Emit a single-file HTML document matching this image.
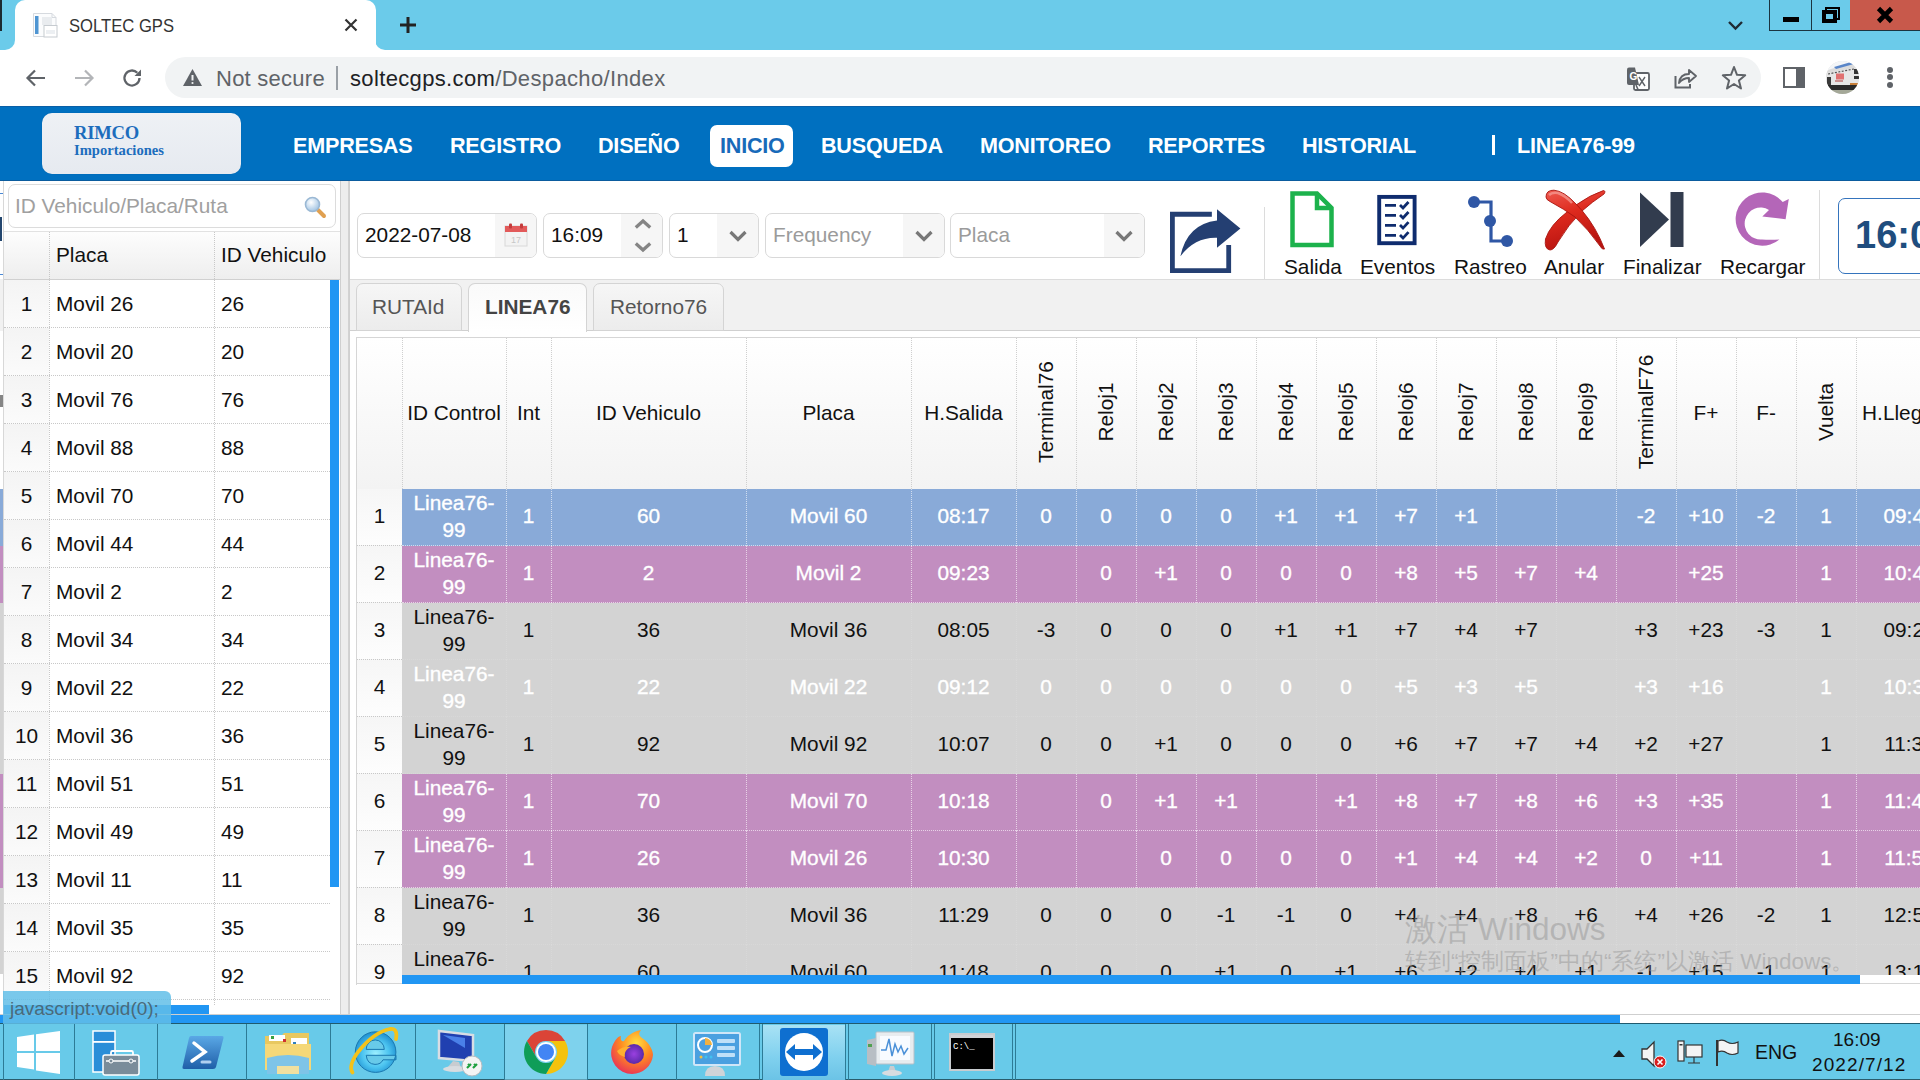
<!DOCTYPE html>
<html><head><meta charset="utf-8">
<style>
*{box-sizing:border-box;margin:0;padding:0}
html,body{width:1920px;height:1080px;overflow:hidden;background:#fff;font-family:"Liberation Sans",sans-serif;color:#000}
.a{position:absolute}
#tabbar{left:0;top:0;width:1920px;height:50px;background:#6bcbea}
#tab{left:15px;top:0;width:361px;height:51px;background:#fff;border-radius:10px 10px 0 0}
#toolbar{left:0;top:50px;width:1920px;height:56px;background:#fff}
#omni{left:165px;top:57px;width:1596px;height:41px;background:#f1f3f4;border-radius:21px}
#nav{left:0;top:106px;width:1920px;height:75px;background:#0070c0;border-top:1px solid #0a5fa6;border-bottom:1px solid #0b5c9e}
.nv{position:absolute;top:131px;font-size:21.6px;font-weight:bold;color:#fff;line-height:30px;white-space:nowrap;letter-spacing:-0.22px}
#taskbar{left:0;top:1023px;width:1920px;height:57px;background:#6acbea;border-top:1px solid #2b6a80}
.lt{font-size:20.8px;line-height:24px;white-space:nowrap;color:#111}
.lnum{left:4px;width:45px;height:48px;background:linear-gradient(180deg,#f4f4f4,#fbfbfb);text-align:center;font-size:20.8px;line-height:48px;color:#111}
.lrow{left:4px;width:326px;height:1px;border-top:1px dotted #c8c8c8}
/*MAINCSS*/
.inp{border:1px solid #d9d9d9;border-radius:7px;background:#fff;overflow:hidden}
.ib{position:absolute;right:0;top:0;height:100%;background:#f6f6f6}
.mt{font-size:20.8px;line-height:24px;white-space:nowrap;color:#111}
.tabx{top:283px;height:48px;background:linear-gradient(180deg,#f6f6f6,#ececec);border:1px solid #d4d4d4;border-radius:7px 7px 0 0}
.tt{top:295px;font-size:20.8px;line-height:24px;white-space:nowrap}
.ht{font-size:20.8px;line-height:24px;white-space:nowrap;text-align:center;color:#111}
.wt{-webkit-text-stroke:0.35px #fff}
.vt{width:200px;text-align:center;font-size:20.8px;line-height:24px;white-space:nowrap;color:#111;transform:rotate(-90deg)}
</style></head>
<body>
<!-- ===== Browser chrome ===== -->

<div id="tabbar" class="a"></div>
<!-- left foot of tab -->
<div class="a" style="left:0;top:40px;width:15px;height:11px;background:#fff"></div>
<div class="a" style="left:0;top:30px;width:15px;height:20px;background:#6bcbea;border-radius:0 0 10px 0"></div>
<div class="a" style="left:375px;top:40px;width:15px;height:11px;background:#fff"></div>
<div class="a" style="left:375px;top:30px;width:15px;height:20px;background:#6bcbea;border-radius:0 0 0 10px"></div>
<div class="a" style="left:0;top:0;width:1.5px;height:31px;background:#1c2a30"></div>
<div id="tab" class="a"></div>
<!-- favicon -->
<svg class="a" style="left:32px;top:12px" width="26" height="26" viewBox="0 0 26 26"><path d="M1.5 1.5H20L24 5.5V24.5H1.5Z" fill="#fbfcfd" stroke="#d6dadf" stroke-width="1"/><path d="M20 1.5V5.5H24" fill="none" stroke="#d6dadf" stroke-width="1"/><rect x="3" y="4" width="3.5" height="18" fill="#4f95d2"/><rect x="10" y="5" width="10" height="8" fill="#e9ecef"/><rect x="12" y="13.5" width="13" height="11.5" fill="#fff" stroke="#c6cbd0" stroke-width="1"/><rect x="14" y="18" width="9" height="4" fill="#eceff2"/></svg>
<div class="a" style="left:69px;top:14px;font-size:19px;color:#333;line-height:24px;white-space:nowrap;transform:scaleX(0.875);transform-origin:0 0">SOLTEC GPS</div>
<svg class="a" style="left:343px;top:17px" width="16" height="16" viewBox="0 0 16 16"><path d="M2.5 2.5L13.5 13.5M13.5 2.5L2.5 13.5" stroke="#333" stroke-width="2.2"/></svg>
<svg class="a" style="left:398px;top:15px" width="20" height="20" viewBox="0 0 20 20"><path d="M10 2V18M2 10H18" stroke="#222" stroke-width="3"/></svg>
<svg class="a" style="left:1727px;top:19px" width="17" height="12" viewBox="0 0 17 12"><path d="M2 3L8.5 9.5L15 3" stroke="#1f2a33" stroke-width="2.4" fill="none"/></svg>
<!-- window buttons -->
<div class="a" style="left:1769px;top:0;width:151px;height:31px;border:1.5px solid #1a3440;border-top:none;background:#6bcbea"></div>
<div class="a" style="left:1811px;top:0;width:1px;height:31px;background:#1a3440"></div>
<div class="a" style="left:1850px;top:0;width:70px;height:30px;background:#c8594b"></div>
<div class="a" style="left:1783px;top:17px;width:16px;height:5px;background:#000"></div>
<div class="a" style="left:1825px;top:7px;width:15px;height:13px;border:2px solid #000;border-top-width:2.5px"></div>
<div class="a" style="left:1822px;top:10px;width:15px;height:13px;border:4px solid #000;background:#6bcbea"></div>
<svg class="a" style="left:1875px;top:6px" width="20" height="18" viewBox="0 0 20 18"><path d="M3.5 2.5L16.5 15.5M16.5 2.5L3.5 15.5" stroke="#000" stroke-width="4.6"/></svg>
<div id="toolbar" class="a"></div>
<svg class="a" style="left:24px;top:66px" width="24" height="24" viewBox="0 0 24 24"><path d="M21 12H4M11 4.5L3.5 12L11 19.5" stroke="#5f6368" stroke-width="2.2" fill="none"/></svg>
<svg class="a" style="left:72px;top:66px" width="24" height="24" viewBox="0 0 24 24"><path d="M3 12H20M13 4.5L20.5 12L13 19.5" stroke="#b3b5b8" stroke-width="2.2" fill="none"/></svg>
<svg class="a" style="left:120px;top:66px" width="24" height="24" viewBox="0 0 24 24"><path d="M19.5 12A7.5 7.5 0 1 1 17.3 6.7" stroke="#5f6368" stroke-width="2.3" fill="none"/><path d="M21 3.5V10H14.5Z" fill="#5f6368"/></svg>
<div id="omni" class="a"></div>
<svg class="a" style="left:182px;top:68px" width="21" height="19" viewBox="0 0 21 19"><path d="M10.5 1L20 18H1Z" fill="#5f6368"/><path d="M10.5 7V12.5" stroke="#f1f3f4" stroke-width="2"/><circle cx="10.5" cy="15" r="1.1" fill="#f1f3f4"/></svg>
<div class="a" style="left:216px;top:65px;font-size:22px;color:#5f6368;line-height:28px;letter-spacing:0.25px">Not secure</div>
<div class="a" style="left:336px;top:66px;width:2px;height:24px;background:#9aa0a6"></div>
<div class="a" style="left:350px;top:65px;font-size:22px;color:#202124;line-height:28px;letter-spacing:0.35px;white-space:nowrap">soltecgps.com<span style="color:#5f6368">/Despacho/Index</span></div>
<!-- right toolbar icons -->
<svg class="a" style="left:1625px;top:66px" width="26" height="26" viewBox="0 0 26 26"><path d="M2 2H11L13 6H22Q24 6 24 8V22Q24 24 22 24H13L11 20H4Q2 20 2 18Z" fill="none" stroke="#fff" stroke-width="0"/><rect x="9" y="7" width="15" height="17" rx="1.5" fill="#fff" stroke="#5f6368" stroke-width="1.8"/><path d="M2 3.5Q2 1.5 4 1.5H10L14 19H4Q2 19 2 17Z" fill="#5f6368"/><text x="4.5" y="14" font-family="Liberation Sans" font-weight="bold" font-size="10" fill="#fff">G</text><path d="M14 11L20 20M20 11L14 20" stroke="#5f6368" stroke-width="1.4"/><path d="M11 19L13 23.5" stroke="#5f6368" stroke-width="1.6"/></svg>
<svg class="a" style="left:1673px;top:66px" width="26" height="24" viewBox="0 0 26 24"><path d="M2.5 10V21.5H17V18" stroke="#5f6368" stroke-width="2" fill="none"/><path d="M6 17Q7 8 16 8V4L23 10L16 16V12Q10 12 6 17Z" stroke="#5f6368" stroke-width="1.9" fill="none" stroke-linejoin="round"/></svg>
<svg class="a" style="left:1721px;top:65px" width="26" height="25" viewBox="0 0 26 25"><path d="M13 2L16 9.8L24.2 10.3L17.9 15.5L20 23.5L13 19L6 23.5L8.1 15.5L1.8 10.3L10 9.8Z" stroke="#5f6368" stroke-width="2" fill="none" stroke-linejoin="round"/></svg>
<div class="a" style="left:1783px;top:67px;width:22px;height:21px;border:2.5px solid #5f6368;border-right-width:9px"></div>
<svg class="a" style="left:1826px;top:61px" width="33" height="33" viewBox="0 0 33 33"><defs><clipPath id="avc"><circle cx="16.5" cy="16.5" r="16.5"/></clipPath></defs><g clip-path="url(#avc)"><rect width="33" height="33" fill="#dcdcdc"/><path d="M5 8L25 2L33 4V0H0V10Z" fill="#f4f6f8"/><path d="M8 6L25 1L28 3L10 8Z" fill="#5a86c8"/><path d="M0 12L33 6V26H0Z" fill="#e6e6e6"/><path d="M2 13L28 8" stroke="#555" stroke-width="1.2" stroke-dasharray="2 1.5"/><rect x="1" y="16" width="4" height="9" fill="#3a3a3a"/><rect x="28" y="8" width="5" height="5" fill="#333"/><rect x="28" y="15" width="5" height="3" fill="#333"/><rect x="10" y="12.5" width="8" height="6" fill="#e07070"/><rect x="9" y="19" width="8" height="2" fill="#c89090"/><rect x="24" y="22" width="9" height="4" fill="#c8803a"/><rect x="0" y="24" width="33" height="5" fill="#2a2a2a"/><rect x="0" y="29" width="33" height="4" fill="#a4a898"/></g></svg>
<div class="a" style="left:1887px;top:67px;width:6px;height:6px;border-radius:50%;background:#5f6368"></div>
<div class="a" style="left:1887px;top:74px;width:6px;height:6px;border-radius:50%;background:#5f6368"></div>
<div class="a" style="left:1887px;top:82px;width:6px;height:6px;border-radius:50%;background:#5f6368"></div>

<!-- ===== Nav ===== -->
<div id="nav" class="a"></div>
<div class="a" style="left:42px;top:113px;width:199px;height:61px;border-radius:10px;background:linear-gradient(180deg,#eef1f5,#e6eaf0);box-shadow:0 0 1px rgba(0,0,0,0.2)"></div>
<div class="a" style="left:74px;top:122px;font-family:'Liberation Serif',serif;font-weight:bold;font-size:18.6px;color:#1d6dbd;line-height:22px;letter-spacing:-0.2px">RIMCO</div>
<div class="a" style="left:74px;top:141px;font-family:'Liberation Serif',serif;font-weight:bold;font-size:14.6px;color:#1d6dbd;line-height:18px">Importaciones</div>
<div class="nv" style="left:293px">EMPRESAS</div>
<div class="nv" style="left:450px">REGISTRO</div>
<div class="nv" style="left:598px">DISEÑO</div>
<div class="a" style="left:710px;top:125px;width:83px;height:42px;background:#fff;border-radius:7px"></div>
<div class="nv" style="left:720px;color:#186ab9">INICIO</div>
<div class="nv" style="left:821px">BUSQUEDA</div>
<div class="nv" style="left:980px">MONITOREO</div>
<div class="nv" style="left:1148px">REPORTES</div>
<div class="nv" style="left:1302px">HISTORIAL</div>
<div class="a" style="left:1492px;top:135px;width:3px;height:20px;background:#fff"></div>
<div class="nv" style="left:1517px">LINEA76-99</div>












<!-- ===== Main ===== -->
<div class="a" style="left:349px;top:181px;width:1571px;height:834px;background:#fff"></div>
<div class="a inp" style="left:357px;top:213px;width:180px;height:45px"><div class="ib" style="width:41px"></div></div>
<div class="a mt" style="left:365px;top:223px;color:#111">2022-07-08</div>
<svg class="a" style="left:503px;top:222px" width="26" height="26" viewBox="0 0 26 26"><rect x="2" y="4" width="22" height="20" fill="#f3f3f3" stroke="#d8d8d8"/><rect x="2" y="4" width="22" height="6" fill="#e25a5a"/><rect x="6" y="1.5" width="3" height="5" rx="1" fill="#c43b3b"/><rect x="17" y="1.5" width="3" height="5" rx="1" fill="#c43b3b"/><text x="8" y="20.5" font-family="Liberation Sans" font-size="9" fill="#c7c7c7">17</text></svg>
<div class="a inp" style="left:543px;top:213px;width:120px;height:45px"><div class="ib" style="width:41px"></div></div>
<div class="a mt" style="left:551px;top:223px;color:#111">16:09</div>
<svg class="a" style="left:633px;top:216px" width="20" height="40" viewBox="0 0 20 40"><path d="M2.8 11.5L10 5L17.2 11.5M2.8 27.5L10 34L17.2 27.5" stroke="#858585" stroke-width="3.3" fill="none"/></svg>
<div class="a inp" style="left:669px;top:213px;width:90px;height:45px"><div class="ib" style="width:41px"></div></div>
<div class="a mt" style="left:677px;top:223px;color:#111">1</div>
<svg class="a chev" style="left:728px;top:229px" width="20" height="14" viewBox="0 0 20 14"><path d="M2.5 3L10 10.5L17.5 3" stroke="#787878" stroke-width="3.2" fill="none"/></svg>
<div class="a inp" style="left:765px;top:213px;width:180px;height:45px"><div class="ib" style="width:41px"></div></div>
<div class="a mt" style="left:773px;top:223px;color:#9b9b9b">Frequency</div>
<svg class="a chev" style="left:914px;top:229px" width="20" height="14" viewBox="0 0 20 14"><path d="M2.5 3L10 10.5L17.5 3" stroke="#787878" stroke-width="3.2" fill="none"/></svg>
<div class="a inp" style="left:950px;top:213px;width:195px;height:45px"><div class="ib" style="width:40px"></div></div>
<div class="a mt" style="left:958px;top:223px;color:#9b9b9b">Placa</div>
<svg class="a chev" style="left:1114px;top:229px" width="20" height="14" viewBox="0 0 20 14"><path d="M2.5 3L10 10.5L17.5 3" stroke="#787878" stroke-width="3.2" fill="none"/></svg>

<svg class="a" style="left:1160px;top:200px" width="90" height="80" viewBox="0 0 90 80"><path d="M51.85 14.25H12.4V70.6H68.7V45" stroke="#243f72" stroke-width="4.8" fill="none"/><path d="M20.4 56.3Q27 24 57 20.4V9.26L80.4 28.5L57 47.8V37.8Q35 37 20.4 56.3Z" fill="#243f72"/></svg>
<div class="a" style="left:1264px;top:207px;width:1px;height:72px;background:#dcdcdc"></div>
<div class="a" style="left:1819px;top:190px;width:1px;height:89px;background:#dcdcdc"></div>
<svg class="a" style="left:1288px;top:189px" width="48" height="60" viewBox="0 0 48 60"><path d="M4.5 4.5H29L43.5 19V56H4.5Z" stroke="#1cb24c" stroke-width="4.5" fill="#fff" stroke-linejoin="miter"/><path d="M29 4.5V19H43.5" stroke="#1cb24c" stroke-width="4.5" fill="none"/></svg>
<svg class="a" style="left:1375px;top:193px" width="44" height="56" viewBox="0 0 44 56"><rect x="4.2" y="3.9" width="35.4" height="46.3" stroke="#0f2c6e" stroke-width="3.9" fill="#fff"/><g stroke="#0f2c6e" stroke-width="2.6" fill="none"><path d="M10 12.3H21M10 22.3H21M10 32.4H21M10 42.4H21" stroke-width="2.8"/><path d="M25 12L28 15L33.5 9M25 22L28 25L33.5 19M25 32.1L28 35.1L33.5 29.1M25 42.1L28 45.1L33.5 39.1" stroke-width="2.8"/></g></svg>
<svg class="a" style="left:1465px;top:194px" width="52" height="56" viewBox="0 0 52 56"><path d="M9 8H26V27H26V47H42" stroke="#2f57a5" stroke-width="3.2" fill="none"/><circle cx="9" cy="8" r="6" fill="#2f57a5"/><circle cx="25" cy="27" r="6" fill="#2f57a5"/><circle cx="42" cy="47" r="6" fill="#2f57a5"/></svg>
<svg class="a" style="left:1538px;top:183px" width="75" height="75" viewBox="0 0 75 75"><defs><linearGradient id="xg" x1="0" y1="0" x2="0.3" y2="1"><stop offset="0" stop-color="#ee5a50"/><stop offset="0.45" stop-color="#de2a1e"/><stop offset="1" stop-color="#b81410"/></linearGradient></defs><g fill="url(#xg)" stroke="#a8140e" stroke-width="0.9"><path d="M12 67Q6 66 7.5 56Q12 42 29 29L38 22Q52 12 65.5 7.5Q68 8 66 11Q54 19 44 28Q30 42 20 59Q16 67 12 67Z"/><path d="M8 14Q8 7 16 7.2Q26 8 38 21L44 27.5Q58 44 66.5 66Q64 67 62 63Q50 46 37 34Q26 26 12 18.5Q8 16.5 8 14Z"/></g><path d="M11 12Q14 9 20 10Q28 13 34 20" stroke="#f6a098" stroke-width="2.5" fill="none" opacity="0.7"/></svg>
<svg class="a" style="left:1638px;top:190px" width="48" height="60" viewBox="0 0 48 60"><path d="M2 2.5L31 29.5L2 57Z" fill="#323c4e"/><rect x="32.5" y="2" width="13" height="55" fill="#323c4e"/></svg>
<svg class="a" style="left:1725px;top:183px" width="75" height="70" viewBox="0 0 75 70"><path d="M44 26.9A16 16 0 1 0 37 56.5Q46 57 54.4 56.4A26.6 26.6 0 1 1 57.7 19.1L63.8 15.9L60.6 36.3L37.3 33.4Z" fill="#b466b8"/></svg>

<div class="a mt" style="left:1284px;top:255px">Salida</div>
<div class="a mt" style="left:1360px;top:255px">Eventos</div>
<div class="a mt" style="left:1454px;top:255px">Rastreo</div>
<div class="a mt" style="left:1544px;top:255px">Anular</div>
<div class="a mt" style="left:1623px;top:255px">Finalizar</div>
<div class="a mt" style="left:1720px;top:255px">Recargar</div>
<div class="a" style="left:1838px;top:198px;width:120px;height:76px;border:1.5px solid #3574bd;border-radius:7px;background:#fff"></div>
<div class="a" style="left:1855px;top:213px;font-size:38px;font-weight:bold;color:#1f4d7e;line-height:44px;white-space:nowrap">16:09</div>
<div class="a" style="left:349px;top:279px;width:1571px;height:52px;background:#f1f1f1;border-top:1px solid #dcdcdc;border-bottom:1px solid #d0d0d0"></div>
<div class="a tabx" style="left:356px;width:106px"></div><div class="a tt" style="left:372px;color:#555">RUTAId</div>
<div class="a tabx" style="left:468px;width:119px;height:49px;background:linear-gradient(180deg,#fafafa,#ffffff);border-bottom:none"></div><div class="a tt" style="left:485px;color:#444;font-weight:bold">LINEA76</div>
<div class="a tabx" style="left:593px;width:131px"></div><div class="a tt" style="left:610px;color:#555">Retorno76</div>
<div class="a" style="left:356px;top:337px;width:1564px;height:648px;border:1px solid #d6d6d6;border-right:none;background:#fff"></div>
<div class="a" style="left:357px;top:338px;width:1563px;height:151px;background:linear-gradient(180deg,#ffffff,#f3f3f3)"></div>
<div class="a" style="left:402px;top:338px;height:151px;border-left:1px dotted #cfcfcf"></div>
<div class="a" style="left:506px;top:338px;height:151px;border-left:1px dotted #cfcfcf"></div>
<div class="a" style="left:551px;top:338px;height:151px;border-left:1px dotted #cfcfcf"></div>
<div class="a" style="left:746px;top:338px;height:151px;border-left:1px dotted #cfcfcf"></div>
<div class="a" style="left:911px;top:338px;height:151px;border-left:1px dotted #cfcfcf"></div>
<div class="a" style="left:1016px;top:338px;height:151px;border-left:1px dotted #cfcfcf"></div>
<div class="a" style="left:1076px;top:338px;height:151px;border-left:1px dotted #cfcfcf"></div>
<div class="a" style="left:1136px;top:338px;height:151px;border-left:1px dotted #cfcfcf"></div>
<div class="a" style="left:1196px;top:338px;height:151px;border-left:1px dotted #cfcfcf"></div>
<div class="a" style="left:1256px;top:338px;height:151px;border-left:1px dotted #cfcfcf"></div>
<div class="a" style="left:1316px;top:338px;height:151px;border-left:1px dotted #cfcfcf"></div>
<div class="a" style="left:1376px;top:338px;height:151px;border-left:1px dotted #cfcfcf"></div>
<div class="a" style="left:1436px;top:338px;height:151px;border-left:1px dotted #cfcfcf"></div>
<div class="a" style="left:1496px;top:338px;height:151px;border-left:1px dotted #cfcfcf"></div>
<div class="a" style="left:1556px;top:338px;height:151px;border-left:1px dotted #cfcfcf"></div>
<div class="a" style="left:1616px;top:338px;height:151px;border-left:1px dotted #cfcfcf"></div>
<div class="a" style="left:1676px;top:338px;height:151px;border-left:1px dotted #cfcfcf"></div>
<div class="a" style="left:1736px;top:338px;height:151px;border-left:1px dotted #cfcfcf"></div>
<div class="a" style="left:1796px;top:338px;height:151px;border-left:1px dotted #cfcfcf"></div>
<div class="a" style="left:1856px;top:338px;height:151px;border-left:1px dotted #cfcfcf"></div>
<div class="a ht" style="left:402px;width:104px;top:400.5px">ID Control</div>
<div class="a ht" style="left:506px;width:45px;top:400.5px">Int</div>
<div class="a ht" style="left:551px;width:195px;top:400.5px">ID Vehiculo</div>
<div class="a ht" style="left:746px;width:165px;top:400.5px">Placa</div>
<div class="a ht" style="left:911px;width:105px;top:400.5px">H.Salida</div>
<div class="a vt" style="left:946.0px;top:400.0px">Terminal76</div>
<div class="a vt" style="left:1006.0px;top:400.0px">Reloj1</div>
<div class="a vt" style="left:1066.0px;top:400.0px">Reloj2</div>
<div class="a vt" style="left:1126.0px;top:400.0px">Reloj3</div>
<div class="a vt" style="left:1186.0px;top:400.0px">Reloj4</div>
<div class="a vt" style="left:1246.0px;top:400.0px">Reloj5</div>
<div class="a vt" style="left:1306.0px;top:400.0px">Reloj6</div>
<div class="a vt" style="left:1366.0px;top:400.0px">Reloj7</div>
<div class="a vt" style="left:1426.0px;top:400.0px">Reloj8</div>
<div class="a vt" style="left:1486.0px;top:400.0px">Reloj9</div>
<div class="a vt" style="left:1546.0px;top:400.0px">TerminalF76</div>
<div class="a ht" style="left:1676px;width:60px;top:400.5px">F+</div>
<div class="a ht" style="left:1736px;width:60px;top:400.5px">F-</div>
<div class="a vt" style="left:1726.0px;top:400.0px">Vuelta</div>
<div class="a ht" style="left:1856px;width:107px;top:400.5px">H.Llegada</div>
<div class="a" style="left:357px;top:489px;width:45px;height:57px;background:linear-gradient(180deg,#f6f6f6,#fdfdfd);border-bottom:1px dotted #c8c8c8"></div>
<div class="a ht" style="left:357px;width:45px;top:504px;color:#111">1</div>
<div class="a" style="left:402px;top:489px;width:1518px;height:57px;background:#89aad8"></div>
<div class="a" style="left:506px;top:489px;height:57px;border-left:1px dotted rgba(255,255,255,0.6)"></div>
<div class="a" style="left:551px;top:489px;height:57px;border-left:1px dotted rgba(255,255,255,0.6)"></div>
<div class="a" style="left:746px;top:489px;height:57px;border-left:1px dotted rgba(255,255,255,0.6)"></div>
<div class="a" style="left:911px;top:489px;height:57px;border-left:1px dotted rgba(255,255,255,0.6)"></div>
<div class="a" style="left:1016px;top:489px;height:57px;border-left:1px dotted rgba(255,255,255,0.6)"></div>
<div class="a" style="left:1076px;top:489px;height:57px;border-left:1px dotted rgba(255,255,255,0.6)"></div>
<div class="a" style="left:1136px;top:489px;height:57px;border-left:1px dotted rgba(255,255,255,0.6)"></div>
<div class="a" style="left:1196px;top:489px;height:57px;border-left:1px dotted rgba(255,255,255,0.6)"></div>
<div class="a" style="left:1256px;top:489px;height:57px;border-left:1px dotted rgba(255,255,255,0.6)"></div>
<div class="a" style="left:1316px;top:489px;height:57px;border-left:1px dotted rgba(255,255,255,0.6)"></div>
<div class="a" style="left:1376px;top:489px;height:57px;border-left:1px dotted rgba(255,255,255,0.6)"></div>
<div class="a" style="left:1436px;top:489px;height:57px;border-left:1px dotted rgba(255,255,255,0.6)"></div>
<div class="a" style="left:1496px;top:489px;height:57px;border-left:1px dotted rgba(255,255,255,0.6)"></div>
<div class="a" style="left:1556px;top:489px;height:57px;border-left:1px dotted rgba(255,255,255,0.6)"></div>
<div class="a" style="left:1616px;top:489px;height:57px;border-left:1px dotted rgba(255,255,255,0.6)"></div>
<div class="a" style="left:1676px;top:489px;height:57px;border-left:1px dotted rgba(255,255,255,0.6)"></div>
<div class="a" style="left:1736px;top:489px;height:57px;border-left:1px dotted rgba(255,255,255,0.6)"></div>
<div class="a" style="left:1796px;top:489px;height:57px;border-left:1px dotted rgba(255,255,255,0.6)"></div>
<div class="a" style="left:1856px;top:489px;height:57px;border-left:1px dotted rgba(255,255,255,0.6)"></div>
<div class="a" style="left:402px;top:545px;width:1518px;height:1px;border-top:1px dotted rgba(255,255,255,0.6)"></div>
<div class="a wt" style="left:402px;width:104px;top:489px;height:54px;color:#fff;text-align:center;font-size:20.8px;line-height:27px">Linea76-<br>99</div>
<div class="a ht wt" style="left:506px;width:45px;top:504px;color:#fff">1</div>
<div class="a ht wt" style="left:551px;width:195px;top:504px;color:#fff">60</div>
<div class="a ht wt" style="left:746px;width:165px;top:504px;color:#fff">Movil 60</div>
<div class="a ht wt" style="left:911px;width:105px;top:504px;color:#fff">08:17</div>
<div class="a ht wt" style="left:1016px;width:60px;top:504px;color:#fff">0</div>
<div class="a ht wt" style="left:1076px;width:60px;top:504px;color:#fff">0</div>
<div class="a ht wt" style="left:1136px;width:60px;top:504px;color:#fff">0</div>
<div class="a ht wt" style="left:1196px;width:60px;top:504px;color:#fff">0</div>
<div class="a ht wt" style="left:1256px;width:60px;top:504px;color:#fff">+1</div>
<div class="a ht wt" style="left:1316px;width:60px;top:504px;color:#fff">+1</div>
<div class="a ht wt" style="left:1376px;width:60px;top:504px;color:#fff">+7</div>
<div class="a ht wt" style="left:1436px;width:60px;top:504px;color:#fff">+1</div>
<div class="a ht wt" style="left:1616px;width:60px;top:504px;color:#fff">-2</div>
<div class="a ht wt" style="left:1676px;width:60px;top:504px;color:#fff">+10</div>
<div class="a ht wt" style="left:1736px;width:60px;top:504px;color:#fff">-2</div>
<div class="a ht wt" style="left:1796px;width:60px;top:504px;color:#fff">1</div>
<div class="a ht wt" style="left:1856px;width:107px;top:504px;color:#fff">09:45</div>
<div class="a" style="left:357px;top:546px;width:45px;height:57px;background:linear-gradient(180deg,#f6f6f6,#fdfdfd);border-bottom:1px dotted #c8c8c8"></div>
<div class="a ht" style="left:357px;width:45px;top:561px;color:#111">2</div>
<div class="a" style="left:402px;top:546px;width:1518px;height:57px;background:#c28ec0"></div>
<div class="a" style="left:506px;top:546px;height:57px;border-left:1px dotted rgba(255,255,255,0.6)"></div>
<div class="a" style="left:551px;top:546px;height:57px;border-left:1px dotted rgba(255,255,255,0.6)"></div>
<div class="a" style="left:746px;top:546px;height:57px;border-left:1px dotted rgba(255,255,255,0.6)"></div>
<div class="a" style="left:911px;top:546px;height:57px;border-left:1px dotted rgba(255,255,255,0.6)"></div>
<div class="a" style="left:1016px;top:546px;height:57px;border-left:1px dotted rgba(255,255,255,0.6)"></div>
<div class="a" style="left:1076px;top:546px;height:57px;border-left:1px dotted rgba(255,255,255,0.6)"></div>
<div class="a" style="left:1136px;top:546px;height:57px;border-left:1px dotted rgba(255,255,255,0.6)"></div>
<div class="a" style="left:1196px;top:546px;height:57px;border-left:1px dotted rgba(255,255,255,0.6)"></div>
<div class="a" style="left:1256px;top:546px;height:57px;border-left:1px dotted rgba(255,255,255,0.6)"></div>
<div class="a" style="left:1316px;top:546px;height:57px;border-left:1px dotted rgba(255,255,255,0.6)"></div>
<div class="a" style="left:1376px;top:546px;height:57px;border-left:1px dotted rgba(255,255,255,0.6)"></div>
<div class="a" style="left:1436px;top:546px;height:57px;border-left:1px dotted rgba(255,255,255,0.6)"></div>
<div class="a" style="left:1496px;top:546px;height:57px;border-left:1px dotted rgba(255,255,255,0.6)"></div>
<div class="a" style="left:1556px;top:546px;height:57px;border-left:1px dotted rgba(255,255,255,0.6)"></div>
<div class="a" style="left:1616px;top:546px;height:57px;border-left:1px dotted rgba(255,255,255,0.6)"></div>
<div class="a" style="left:1676px;top:546px;height:57px;border-left:1px dotted rgba(255,255,255,0.6)"></div>
<div class="a" style="left:1736px;top:546px;height:57px;border-left:1px dotted rgba(255,255,255,0.6)"></div>
<div class="a" style="left:1796px;top:546px;height:57px;border-left:1px dotted rgba(255,255,255,0.6)"></div>
<div class="a" style="left:1856px;top:546px;height:57px;border-left:1px dotted rgba(255,255,255,0.6)"></div>
<div class="a" style="left:402px;top:602px;width:1518px;height:1px;border-top:1px dotted rgba(255,255,255,0.6)"></div>
<div class="a wt" style="left:402px;width:104px;top:546px;height:54px;color:#fff;text-align:center;font-size:20.8px;line-height:27px">Linea76-<br>99</div>
<div class="a ht wt" style="left:506px;width:45px;top:561px;color:#fff">1</div>
<div class="a ht wt" style="left:551px;width:195px;top:561px;color:#fff">2</div>
<div class="a ht wt" style="left:746px;width:165px;top:561px;color:#fff">Movil 2</div>
<div class="a ht wt" style="left:911px;width:105px;top:561px;color:#fff">09:23</div>
<div class="a ht wt" style="left:1076px;width:60px;top:561px;color:#fff">0</div>
<div class="a ht wt" style="left:1136px;width:60px;top:561px;color:#fff">+1</div>
<div class="a ht wt" style="left:1196px;width:60px;top:561px;color:#fff">0</div>
<div class="a ht wt" style="left:1256px;width:60px;top:561px;color:#fff">0</div>
<div class="a ht wt" style="left:1316px;width:60px;top:561px;color:#fff">0</div>
<div class="a ht wt" style="left:1376px;width:60px;top:561px;color:#fff">+8</div>
<div class="a ht wt" style="left:1436px;width:60px;top:561px;color:#fff">+5</div>
<div class="a ht wt" style="left:1496px;width:60px;top:561px;color:#fff">+7</div>
<div class="a ht wt" style="left:1556px;width:60px;top:561px;color:#fff">+4</div>
<div class="a ht wt" style="left:1676px;width:60px;top:561px;color:#fff">+25</div>
<div class="a ht wt" style="left:1796px;width:60px;top:561px;color:#fff">1</div>
<div class="a ht wt" style="left:1856px;width:107px;top:561px;color:#fff">10:42</div>
<div class="a" style="left:357px;top:603px;width:45px;height:57px;background:linear-gradient(180deg,#f6f6f6,#fdfdfd);border-bottom:1px dotted #c8c8c8"></div>
<div class="a ht" style="left:357px;width:45px;top:618px;color:#111">3</div>
<div class="a" style="left:402px;top:603px;width:1518px;height:57px;background:#d3d3d3"></div>
<div class="a" style="left:506px;top:603px;height:57px;border-left:1px dotted rgba(255,255,255,0.12)"></div>
<div class="a" style="left:551px;top:603px;height:57px;border-left:1px dotted rgba(255,255,255,0.12)"></div>
<div class="a" style="left:746px;top:603px;height:57px;border-left:1px dotted rgba(255,255,255,0.12)"></div>
<div class="a" style="left:911px;top:603px;height:57px;border-left:1px dotted rgba(255,255,255,0.12)"></div>
<div class="a" style="left:1016px;top:603px;height:57px;border-left:1px dotted rgba(255,255,255,0.12)"></div>
<div class="a" style="left:1076px;top:603px;height:57px;border-left:1px dotted rgba(255,255,255,0.12)"></div>
<div class="a" style="left:1136px;top:603px;height:57px;border-left:1px dotted rgba(255,255,255,0.12)"></div>
<div class="a" style="left:1196px;top:603px;height:57px;border-left:1px dotted rgba(255,255,255,0.12)"></div>
<div class="a" style="left:1256px;top:603px;height:57px;border-left:1px dotted rgba(255,255,255,0.12)"></div>
<div class="a" style="left:1316px;top:603px;height:57px;border-left:1px dotted rgba(255,255,255,0.12)"></div>
<div class="a" style="left:1376px;top:603px;height:57px;border-left:1px dotted rgba(255,255,255,0.12)"></div>
<div class="a" style="left:1436px;top:603px;height:57px;border-left:1px dotted rgba(255,255,255,0.12)"></div>
<div class="a" style="left:1496px;top:603px;height:57px;border-left:1px dotted rgba(255,255,255,0.12)"></div>
<div class="a" style="left:1556px;top:603px;height:57px;border-left:1px dotted rgba(255,255,255,0.12)"></div>
<div class="a" style="left:1616px;top:603px;height:57px;border-left:1px dotted rgba(255,255,255,0.12)"></div>
<div class="a" style="left:1676px;top:603px;height:57px;border-left:1px dotted rgba(255,255,255,0.12)"></div>
<div class="a" style="left:1736px;top:603px;height:57px;border-left:1px dotted rgba(255,255,255,0.12)"></div>
<div class="a" style="left:1796px;top:603px;height:57px;border-left:1px dotted rgba(255,255,255,0.12)"></div>
<div class="a" style="left:1856px;top:603px;height:57px;border-left:1px dotted rgba(255,255,255,0.12)"></div>
<div class="a" style="left:402px;top:659px;width:1518px;height:1px;border-top:1px dotted rgba(255,255,255,0.12)"></div>
<div class="a" style="left:402px;width:104px;top:603px;height:54px;color:#111;text-align:center;font-size:20.8px;line-height:27px">Linea76-<br>99</div>
<div class="a ht" style="left:506px;width:45px;top:618px;color:#111">1</div>
<div class="a ht" style="left:551px;width:195px;top:618px;color:#111">36</div>
<div class="a ht" style="left:746px;width:165px;top:618px;color:#111">Movil 36</div>
<div class="a ht" style="left:911px;width:105px;top:618px;color:#111">08:05</div>
<div class="a ht" style="left:1016px;width:60px;top:618px;color:#111">-3</div>
<div class="a ht" style="left:1076px;width:60px;top:618px;color:#111">0</div>
<div class="a ht" style="left:1136px;width:60px;top:618px;color:#111">0</div>
<div class="a ht" style="left:1196px;width:60px;top:618px;color:#111">0</div>
<div class="a ht" style="left:1256px;width:60px;top:618px;color:#111">+1</div>
<div class="a ht" style="left:1316px;width:60px;top:618px;color:#111">+1</div>
<div class="a ht" style="left:1376px;width:60px;top:618px;color:#111">+7</div>
<div class="a ht" style="left:1436px;width:60px;top:618px;color:#111">+4</div>
<div class="a ht" style="left:1496px;width:60px;top:618px;color:#111">+7</div>
<div class="a ht" style="left:1616px;width:60px;top:618px;color:#111">+3</div>
<div class="a ht" style="left:1676px;width:60px;top:618px;color:#111">+23</div>
<div class="a ht" style="left:1736px;width:60px;top:618px;color:#111">-3</div>
<div class="a ht" style="left:1796px;width:60px;top:618px;color:#111">1</div>
<div class="a ht" style="left:1856px;width:107px;top:618px;color:#111">09:28</div>
<div class="a" style="left:357px;top:660px;width:45px;height:57px;background:linear-gradient(180deg,#f6f6f6,#fdfdfd);border-bottom:1px dotted #c8c8c8"></div>
<div class="a ht" style="left:357px;width:45px;top:675px;color:#111">4</div>
<div class="a" style="left:402px;top:660px;width:1518px;height:57px;background:#d3d3d3"></div>
<div class="a" style="left:506px;top:660px;height:57px;border-left:1px dotted rgba(255,255,255,0.12)"></div>
<div class="a" style="left:551px;top:660px;height:57px;border-left:1px dotted rgba(255,255,255,0.12)"></div>
<div class="a" style="left:746px;top:660px;height:57px;border-left:1px dotted rgba(255,255,255,0.12)"></div>
<div class="a" style="left:911px;top:660px;height:57px;border-left:1px dotted rgba(255,255,255,0.12)"></div>
<div class="a" style="left:1016px;top:660px;height:57px;border-left:1px dotted rgba(255,255,255,0.12)"></div>
<div class="a" style="left:1076px;top:660px;height:57px;border-left:1px dotted rgba(255,255,255,0.12)"></div>
<div class="a" style="left:1136px;top:660px;height:57px;border-left:1px dotted rgba(255,255,255,0.12)"></div>
<div class="a" style="left:1196px;top:660px;height:57px;border-left:1px dotted rgba(255,255,255,0.12)"></div>
<div class="a" style="left:1256px;top:660px;height:57px;border-left:1px dotted rgba(255,255,255,0.12)"></div>
<div class="a" style="left:1316px;top:660px;height:57px;border-left:1px dotted rgba(255,255,255,0.12)"></div>
<div class="a" style="left:1376px;top:660px;height:57px;border-left:1px dotted rgba(255,255,255,0.12)"></div>
<div class="a" style="left:1436px;top:660px;height:57px;border-left:1px dotted rgba(255,255,255,0.12)"></div>
<div class="a" style="left:1496px;top:660px;height:57px;border-left:1px dotted rgba(255,255,255,0.12)"></div>
<div class="a" style="left:1556px;top:660px;height:57px;border-left:1px dotted rgba(255,255,255,0.12)"></div>
<div class="a" style="left:1616px;top:660px;height:57px;border-left:1px dotted rgba(255,255,255,0.12)"></div>
<div class="a" style="left:1676px;top:660px;height:57px;border-left:1px dotted rgba(255,255,255,0.12)"></div>
<div class="a" style="left:1736px;top:660px;height:57px;border-left:1px dotted rgba(255,255,255,0.12)"></div>
<div class="a" style="left:1796px;top:660px;height:57px;border-left:1px dotted rgba(255,255,255,0.12)"></div>
<div class="a" style="left:1856px;top:660px;height:57px;border-left:1px dotted rgba(255,255,255,0.12)"></div>
<div class="a" style="left:402px;top:716px;width:1518px;height:1px;border-top:1px dotted rgba(255,255,255,0.12)"></div>
<div class="a wt" style="left:402px;width:104px;top:660px;height:54px;color:#fff;text-align:center;font-size:20.8px;line-height:27px">Linea76-<br>99</div>
<div class="a ht wt" style="left:506px;width:45px;top:675px;color:#fff">1</div>
<div class="a ht wt" style="left:551px;width:195px;top:675px;color:#fff">22</div>
<div class="a ht wt" style="left:746px;width:165px;top:675px;color:#fff">Movil 22</div>
<div class="a ht wt" style="left:911px;width:105px;top:675px;color:#fff">09:12</div>
<div class="a ht wt" style="left:1016px;width:60px;top:675px;color:#fff">0</div>
<div class="a ht wt" style="left:1076px;width:60px;top:675px;color:#fff">0</div>
<div class="a ht wt" style="left:1136px;width:60px;top:675px;color:#fff">0</div>
<div class="a ht wt" style="left:1196px;width:60px;top:675px;color:#fff">0</div>
<div class="a ht wt" style="left:1256px;width:60px;top:675px;color:#fff">0</div>
<div class="a ht wt" style="left:1316px;width:60px;top:675px;color:#fff">0</div>
<div class="a ht wt" style="left:1376px;width:60px;top:675px;color:#fff">+5</div>
<div class="a ht wt" style="left:1436px;width:60px;top:675px;color:#fff">+3</div>
<div class="a ht wt" style="left:1496px;width:60px;top:675px;color:#fff">+5</div>
<div class="a ht wt" style="left:1616px;width:60px;top:675px;color:#fff">+3</div>
<div class="a ht wt" style="left:1676px;width:60px;top:675px;color:#fff">+16</div>
<div class="a ht wt" style="left:1796px;width:60px;top:675px;color:#fff">1</div>
<div class="a ht wt" style="left:1856px;width:107px;top:675px;color:#fff">10:30</div>
<div class="a" style="left:357px;top:717px;width:45px;height:57px;background:linear-gradient(180deg,#f6f6f6,#fdfdfd);border-bottom:1px dotted #c8c8c8"></div>
<div class="a ht" style="left:357px;width:45px;top:732px;color:#111">5</div>
<div class="a" style="left:402px;top:717px;width:1518px;height:57px;background:#d3d3d3"></div>
<div class="a" style="left:506px;top:717px;height:57px;border-left:1px dotted rgba(255,255,255,0.12)"></div>
<div class="a" style="left:551px;top:717px;height:57px;border-left:1px dotted rgba(255,255,255,0.12)"></div>
<div class="a" style="left:746px;top:717px;height:57px;border-left:1px dotted rgba(255,255,255,0.12)"></div>
<div class="a" style="left:911px;top:717px;height:57px;border-left:1px dotted rgba(255,255,255,0.12)"></div>
<div class="a" style="left:1016px;top:717px;height:57px;border-left:1px dotted rgba(255,255,255,0.12)"></div>
<div class="a" style="left:1076px;top:717px;height:57px;border-left:1px dotted rgba(255,255,255,0.12)"></div>
<div class="a" style="left:1136px;top:717px;height:57px;border-left:1px dotted rgba(255,255,255,0.12)"></div>
<div class="a" style="left:1196px;top:717px;height:57px;border-left:1px dotted rgba(255,255,255,0.12)"></div>
<div class="a" style="left:1256px;top:717px;height:57px;border-left:1px dotted rgba(255,255,255,0.12)"></div>
<div class="a" style="left:1316px;top:717px;height:57px;border-left:1px dotted rgba(255,255,255,0.12)"></div>
<div class="a" style="left:1376px;top:717px;height:57px;border-left:1px dotted rgba(255,255,255,0.12)"></div>
<div class="a" style="left:1436px;top:717px;height:57px;border-left:1px dotted rgba(255,255,255,0.12)"></div>
<div class="a" style="left:1496px;top:717px;height:57px;border-left:1px dotted rgba(255,255,255,0.12)"></div>
<div class="a" style="left:1556px;top:717px;height:57px;border-left:1px dotted rgba(255,255,255,0.12)"></div>
<div class="a" style="left:1616px;top:717px;height:57px;border-left:1px dotted rgba(255,255,255,0.12)"></div>
<div class="a" style="left:1676px;top:717px;height:57px;border-left:1px dotted rgba(255,255,255,0.12)"></div>
<div class="a" style="left:1736px;top:717px;height:57px;border-left:1px dotted rgba(255,255,255,0.12)"></div>
<div class="a" style="left:1796px;top:717px;height:57px;border-left:1px dotted rgba(255,255,255,0.12)"></div>
<div class="a" style="left:1856px;top:717px;height:57px;border-left:1px dotted rgba(255,255,255,0.12)"></div>
<div class="a" style="left:402px;top:773px;width:1518px;height:1px;border-top:1px dotted rgba(255,255,255,0.12)"></div>
<div class="a" style="left:402px;width:104px;top:717px;height:54px;color:#111;text-align:center;font-size:20.8px;line-height:27px">Linea76-<br>99</div>
<div class="a ht" style="left:506px;width:45px;top:732px;color:#111">1</div>
<div class="a ht" style="left:551px;width:195px;top:732px;color:#111">92</div>
<div class="a ht" style="left:746px;width:165px;top:732px;color:#111">Movil 92</div>
<div class="a ht" style="left:911px;width:105px;top:732px;color:#111">10:07</div>
<div class="a ht" style="left:1016px;width:60px;top:732px;color:#111">0</div>
<div class="a ht" style="left:1076px;width:60px;top:732px;color:#111">0</div>
<div class="a ht" style="left:1136px;width:60px;top:732px;color:#111">+1</div>
<div class="a ht" style="left:1196px;width:60px;top:732px;color:#111">0</div>
<div class="a ht" style="left:1256px;width:60px;top:732px;color:#111">0</div>
<div class="a ht" style="left:1316px;width:60px;top:732px;color:#111">0</div>
<div class="a ht" style="left:1376px;width:60px;top:732px;color:#111">+6</div>
<div class="a ht" style="left:1436px;width:60px;top:732px;color:#111">+7</div>
<div class="a ht" style="left:1496px;width:60px;top:732px;color:#111">+7</div>
<div class="a ht" style="left:1556px;width:60px;top:732px;color:#111">+4</div>
<div class="a ht" style="left:1616px;width:60px;top:732px;color:#111">+2</div>
<div class="a ht" style="left:1676px;width:60px;top:732px;color:#111">+27</div>
<div class="a ht" style="left:1796px;width:60px;top:732px;color:#111">1</div>
<div class="a ht" style="left:1856px;width:107px;top:732px;color:#111">11:35</div>
<div class="a" style="left:357px;top:774px;width:45px;height:57px;background:linear-gradient(180deg,#f6f6f6,#fdfdfd);border-bottom:1px dotted #c8c8c8"></div>
<div class="a ht" style="left:357px;width:45px;top:789px;color:#111">6</div>
<div class="a" style="left:402px;top:774px;width:1518px;height:57px;background:#c28ec0"></div>
<div class="a" style="left:506px;top:774px;height:57px;border-left:1px dotted rgba(255,255,255,0.6)"></div>
<div class="a" style="left:551px;top:774px;height:57px;border-left:1px dotted rgba(255,255,255,0.6)"></div>
<div class="a" style="left:746px;top:774px;height:57px;border-left:1px dotted rgba(255,255,255,0.6)"></div>
<div class="a" style="left:911px;top:774px;height:57px;border-left:1px dotted rgba(255,255,255,0.6)"></div>
<div class="a" style="left:1016px;top:774px;height:57px;border-left:1px dotted rgba(255,255,255,0.6)"></div>
<div class="a" style="left:1076px;top:774px;height:57px;border-left:1px dotted rgba(255,255,255,0.6)"></div>
<div class="a" style="left:1136px;top:774px;height:57px;border-left:1px dotted rgba(255,255,255,0.6)"></div>
<div class="a" style="left:1196px;top:774px;height:57px;border-left:1px dotted rgba(255,255,255,0.6)"></div>
<div class="a" style="left:1256px;top:774px;height:57px;border-left:1px dotted rgba(255,255,255,0.6)"></div>
<div class="a" style="left:1316px;top:774px;height:57px;border-left:1px dotted rgba(255,255,255,0.6)"></div>
<div class="a" style="left:1376px;top:774px;height:57px;border-left:1px dotted rgba(255,255,255,0.6)"></div>
<div class="a" style="left:1436px;top:774px;height:57px;border-left:1px dotted rgba(255,255,255,0.6)"></div>
<div class="a" style="left:1496px;top:774px;height:57px;border-left:1px dotted rgba(255,255,255,0.6)"></div>
<div class="a" style="left:1556px;top:774px;height:57px;border-left:1px dotted rgba(255,255,255,0.6)"></div>
<div class="a" style="left:1616px;top:774px;height:57px;border-left:1px dotted rgba(255,255,255,0.6)"></div>
<div class="a" style="left:1676px;top:774px;height:57px;border-left:1px dotted rgba(255,255,255,0.6)"></div>
<div class="a" style="left:1736px;top:774px;height:57px;border-left:1px dotted rgba(255,255,255,0.6)"></div>
<div class="a" style="left:1796px;top:774px;height:57px;border-left:1px dotted rgba(255,255,255,0.6)"></div>
<div class="a" style="left:1856px;top:774px;height:57px;border-left:1px dotted rgba(255,255,255,0.6)"></div>
<div class="a" style="left:402px;top:830px;width:1518px;height:1px;border-top:1px dotted rgba(255,255,255,0.6)"></div>
<div class="a wt" style="left:402px;width:104px;top:774px;height:54px;color:#fff;text-align:center;font-size:20.8px;line-height:27px">Linea76-<br>99</div>
<div class="a ht wt" style="left:506px;width:45px;top:789px;color:#fff">1</div>
<div class="a ht wt" style="left:551px;width:195px;top:789px;color:#fff">70</div>
<div class="a ht wt" style="left:746px;width:165px;top:789px;color:#fff">Movil 70</div>
<div class="a ht wt" style="left:911px;width:105px;top:789px;color:#fff">10:18</div>
<div class="a ht wt" style="left:1076px;width:60px;top:789px;color:#fff">0</div>
<div class="a ht wt" style="left:1136px;width:60px;top:789px;color:#fff">+1</div>
<div class="a ht wt" style="left:1196px;width:60px;top:789px;color:#fff">+1</div>
<div class="a ht wt" style="left:1316px;width:60px;top:789px;color:#fff">+1</div>
<div class="a ht wt" style="left:1376px;width:60px;top:789px;color:#fff">+8</div>
<div class="a ht wt" style="left:1436px;width:60px;top:789px;color:#fff">+7</div>
<div class="a ht wt" style="left:1496px;width:60px;top:789px;color:#fff">+8</div>
<div class="a ht wt" style="left:1556px;width:60px;top:789px;color:#fff">+6</div>
<div class="a ht wt" style="left:1616px;width:60px;top:789px;color:#fff">+3</div>
<div class="a ht wt" style="left:1676px;width:60px;top:789px;color:#fff">+35</div>
<div class="a ht wt" style="left:1796px;width:60px;top:789px;color:#fff">1</div>
<div class="a ht wt" style="left:1856px;width:107px;top:789px;color:#fff">11:46</div>
<div class="a" style="left:357px;top:831px;width:45px;height:57px;background:linear-gradient(180deg,#f6f6f6,#fdfdfd);border-bottom:1px dotted #c8c8c8"></div>
<div class="a ht" style="left:357px;width:45px;top:846px;color:#111">7</div>
<div class="a" style="left:402px;top:831px;width:1518px;height:57px;background:#c28ec0"></div>
<div class="a" style="left:506px;top:831px;height:57px;border-left:1px dotted rgba(255,255,255,0.6)"></div>
<div class="a" style="left:551px;top:831px;height:57px;border-left:1px dotted rgba(255,255,255,0.6)"></div>
<div class="a" style="left:746px;top:831px;height:57px;border-left:1px dotted rgba(255,255,255,0.6)"></div>
<div class="a" style="left:911px;top:831px;height:57px;border-left:1px dotted rgba(255,255,255,0.6)"></div>
<div class="a" style="left:1016px;top:831px;height:57px;border-left:1px dotted rgba(255,255,255,0.6)"></div>
<div class="a" style="left:1076px;top:831px;height:57px;border-left:1px dotted rgba(255,255,255,0.6)"></div>
<div class="a" style="left:1136px;top:831px;height:57px;border-left:1px dotted rgba(255,255,255,0.6)"></div>
<div class="a" style="left:1196px;top:831px;height:57px;border-left:1px dotted rgba(255,255,255,0.6)"></div>
<div class="a" style="left:1256px;top:831px;height:57px;border-left:1px dotted rgba(255,255,255,0.6)"></div>
<div class="a" style="left:1316px;top:831px;height:57px;border-left:1px dotted rgba(255,255,255,0.6)"></div>
<div class="a" style="left:1376px;top:831px;height:57px;border-left:1px dotted rgba(255,255,255,0.6)"></div>
<div class="a" style="left:1436px;top:831px;height:57px;border-left:1px dotted rgba(255,255,255,0.6)"></div>
<div class="a" style="left:1496px;top:831px;height:57px;border-left:1px dotted rgba(255,255,255,0.6)"></div>
<div class="a" style="left:1556px;top:831px;height:57px;border-left:1px dotted rgba(255,255,255,0.6)"></div>
<div class="a" style="left:1616px;top:831px;height:57px;border-left:1px dotted rgba(255,255,255,0.6)"></div>
<div class="a" style="left:1676px;top:831px;height:57px;border-left:1px dotted rgba(255,255,255,0.6)"></div>
<div class="a" style="left:1736px;top:831px;height:57px;border-left:1px dotted rgba(255,255,255,0.6)"></div>
<div class="a" style="left:1796px;top:831px;height:57px;border-left:1px dotted rgba(255,255,255,0.6)"></div>
<div class="a" style="left:1856px;top:831px;height:57px;border-left:1px dotted rgba(255,255,255,0.6)"></div>
<div class="a" style="left:402px;top:887px;width:1518px;height:1px;border-top:1px dotted rgba(255,255,255,0.6)"></div>
<div class="a wt" style="left:402px;width:104px;top:831px;height:54px;color:#fff;text-align:center;font-size:20.8px;line-height:27px">Linea76-<br>99</div>
<div class="a ht wt" style="left:506px;width:45px;top:846px;color:#fff">1</div>
<div class="a ht wt" style="left:551px;width:195px;top:846px;color:#fff">26</div>
<div class="a ht wt" style="left:746px;width:165px;top:846px;color:#fff">Movil 26</div>
<div class="a ht wt" style="left:911px;width:105px;top:846px;color:#fff">10:30</div>
<div class="a ht wt" style="left:1136px;width:60px;top:846px;color:#fff">0</div>
<div class="a ht wt" style="left:1196px;width:60px;top:846px;color:#fff">0</div>
<div class="a ht wt" style="left:1256px;width:60px;top:846px;color:#fff">0</div>
<div class="a ht wt" style="left:1316px;width:60px;top:846px;color:#fff">0</div>
<div class="a ht wt" style="left:1376px;width:60px;top:846px;color:#fff">+1</div>
<div class="a ht wt" style="left:1436px;width:60px;top:846px;color:#fff">+4</div>
<div class="a ht wt" style="left:1496px;width:60px;top:846px;color:#fff">+4</div>
<div class="a ht wt" style="left:1556px;width:60px;top:846px;color:#fff">+2</div>
<div class="a ht wt" style="left:1616px;width:60px;top:846px;color:#fff">0</div>
<div class="a ht wt" style="left:1676px;width:60px;top:846px;color:#fff">+11</div>
<div class="a ht wt" style="left:1796px;width:60px;top:846px;color:#fff">1</div>
<div class="a ht wt" style="left:1856px;width:107px;top:846px;color:#fff">11:55</div>
<div class="a" style="left:357px;top:888px;width:45px;height:57px;background:linear-gradient(180deg,#f6f6f6,#fdfdfd);border-bottom:1px dotted #c8c8c8"></div>
<div class="a ht" style="left:357px;width:45px;top:903px;color:#111">8</div>
<div class="a" style="left:402px;top:888px;width:1518px;height:57px;background:#d3d3d3"></div>
<div class="a" style="left:506px;top:888px;height:57px;border-left:1px dotted rgba(255,255,255,0.12)"></div>
<div class="a" style="left:551px;top:888px;height:57px;border-left:1px dotted rgba(255,255,255,0.12)"></div>
<div class="a" style="left:746px;top:888px;height:57px;border-left:1px dotted rgba(255,255,255,0.12)"></div>
<div class="a" style="left:911px;top:888px;height:57px;border-left:1px dotted rgba(255,255,255,0.12)"></div>
<div class="a" style="left:1016px;top:888px;height:57px;border-left:1px dotted rgba(255,255,255,0.12)"></div>
<div class="a" style="left:1076px;top:888px;height:57px;border-left:1px dotted rgba(255,255,255,0.12)"></div>
<div class="a" style="left:1136px;top:888px;height:57px;border-left:1px dotted rgba(255,255,255,0.12)"></div>
<div class="a" style="left:1196px;top:888px;height:57px;border-left:1px dotted rgba(255,255,255,0.12)"></div>
<div class="a" style="left:1256px;top:888px;height:57px;border-left:1px dotted rgba(255,255,255,0.12)"></div>
<div class="a" style="left:1316px;top:888px;height:57px;border-left:1px dotted rgba(255,255,255,0.12)"></div>
<div class="a" style="left:1376px;top:888px;height:57px;border-left:1px dotted rgba(255,255,255,0.12)"></div>
<div class="a" style="left:1436px;top:888px;height:57px;border-left:1px dotted rgba(255,255,255,0.12)"></div>
<div class="a" style="left:1496px;top:888px;height:57px;border-left:1px dotted rgba(255,255,255,0.12)"></div>
<div class="a" style="left:1556px;top:888px;height:57px;border-left:1px dotted rgba(255,255,255,0.12)"></div>
<div class="a" style="left:1616px;top:888px;height:57px;border-left:1px dotted rgba(255,255,255,0.12)"></div>
<div class="a" style="left:1676px;top:888px;height:57px;border-left:1px dotted rgba(255,255,255,0.12)"></div>
<div class="a" style="left:1736px;top:888px;height:57px;border-left:1px dotted rgba(255,255,255,0.12)"></div>
<div class="a" style="left:1796px;top:888px;height:57px;border-left:1px dotted rgba(255,255,255,0.12)"></div>
<div class="a" style="left:1856px;top:888px;height:57px;border-left:1px dotted rgba(255,255,255,0.12)"></div>
<div class="a" style="left:402px;top:944px;width:1518px;height:1px;border-top:1px dotted rgba(255,255,255,0.12)"></div>
<div class="a" style="left:402px;width:104px;top:888px;height:54px;color:#111;text-align:center;font-size:20.8px;line-height:27px">Linea76-<br>99</div>
<div class="a ht" style="left:506px;width:45px;top:903px;color:#111">1</div>
<div class="a ht" style="left:551px;width:195px;top:903px;color:#111">36</div>
<div class="a ht" style="left:746px;width:165px;top:903px;color:#111">Movil 36</div>
<div class="a ht" style="left:911px;width:105px;top:903px;color:#111">11:29</div>
<div class="a ht" style="left:1016px;width:60px;top:903px;color:#111">0</div>
<div class="a ht" style="left:1076px;width:60px;top:903px;color:#111">0</div>
<div class="a ht" style="left:1136px;width:60px;top:903px;color:#111">0</div>
<div class="a ht" style="left:1196px;width:60px;top:903px;color:#111">-1</div>
<div class="a ht" style="left:1256px;width:60px;top:903px;color:#111">-1</div>
<div class="a ht" style="left:1316px;width:60px;top:903px;color:#111">0</div>
<div class="a ht" style="left:1376px;width:60px;top:903px;color:#111">+4</div>
<div class="a ht" style="left:1436px;width:60px;top:903px;color:#111">+4</div>
<div class="a ht" style="left:1496px;width:60px;top:903px;color:#111">+8</div>
<div class="a ht" style="left:1556px;width:60px;top:903px;color:#111">+6</div>
<div class="a ht" style="left:1616px;width:60px;top:903px;color:#111">+4</div>
<div class="a ht" style="left:1676px;width:60px;top:903px;color:#111">+26</div>
<div class="a ht" style="left:1736px;width:60px;top:903px;color:#111">-2</div>
<div class="a ht" style="left:1796px;width:60px;top:903px;color:#111">1</div>
<div class="a ht" style="left:1856px;width:107px;top:903px;color:#111">12:55</div>
<div class="a" style="left:357px;top:945px;width:45px;height:57px;background:linear-gradient(180deg,#f6f6f6,#fdfdfd);border-bottom:1px dotted #c8c8c8"></div>
<div class="a ht" style="left:357px;width:45px;top:960px;color:#111">9</div>
<div class="a" style="left:402px;top:945px;width:1518px;height:57px;background:#d3d3d3"></div>
<div class="a" style="left:506px;top:945px;height:57px;border-left:1px dotted rgba(255,255,255,0.12)"></div>
<div class="a" style="left:551px;top:945px;height:57px;border-left:1px dotted rgba(255,255,255,0.12)"></div>
<div class="a" style="left:746px;top:945px;height:57px;border-left:1px dotted rgba(255,255,255,0.12)"></div>
<div class="a" style="left:911px;top:945px;height:57px;border-left:1px dotted rgba(255,255,255,0.12)"></div>
<div class="a" style="left:1016px;top:945px;height:57px;border-left:1px dotted rgba(255,255,255,0.12)"></div>
<div class="a" style="left:1076px;top:945px;height:57px;border-left:1px dotted rgba(255,255,255,0.12)"></div>
<div class="a" style="left:1136px;top:945px;height:57px;border-left:1px dotted rgba(255,255,255,0.12)"></div>
<div class="a" style="left:1196px;top:945px;height:57px;border-left:1px dotted rgba(255,255,255,0.12)"></div>
<div class="a" style="left:1256px;top:945px;height:57px;border-left:1px dotted rgba(255,255,255,0.12)"></div>
<div class="a" style="left:1316px;top:945px;height:57px;border-left:1px dotted rgba(255,255,255,0.12)"></div>
<div class="a" style="left:1376px;top:945px;height:57px;border-left:1px dotted rgba(255,255,255,0.12)"></div>
<div class="a" style="left:1436px;top:945px;height:57px;border-left:1px dotted rgba(255,255,255,0.12)"></div>
<div class="a" style="left:1496px;top:945px;height:57px;border-left:1px dotted rgba(255,255,255,0.12)"></div>
<div class="a" style="left:1556px;top:945px;height:57px;border-left:1px dotted rgba(255,255,255,0.12)"></div>
<div class="a" style="left:1616px;top:945px;height:57px;border-left:1px dotted rgba(255,255,255,0.12)"></div>
<div class="a" style="left:1676px;top:945px;height:57px;border-left:1px dotted rgba(255,255,255,0.12)"></div>
<div class="a" style="left:1736px;top:945px;height:57px;border-left:1px dotted rgba(255,255,255,0.12)"></div>
<div class="a" style="left:1796px;top:945px;height:57px;border-left:1px dotted rgba(255,255,255,0.12)"></div>
<div class="a" style="left:1856px;top:945px;height:57px;border-left:1px dotted rgba(255,255,255,0.12)"></div>
<div class="a" style="left:402px;top:1001px;width:1518px;height:1px;border-top:1px dotted rgba(255,255,255,0.12)"></div>
<div class="a" style="left:402px;width:104px;top:945px;height:54px;color:#111;text-align:center;font-size:20.8px;line-height:27px">Linea76-<br>99</div>
<div class="a ht" style="left:506px;width:45px;top:960px;color:#111">1</div>
<div class="a ht" style="left:551px;width:195px;top:960px;color:#111">60</div>
<div class="a ht" style="left:746px;width:165px;top:960px;color:#111">Movil 60</div>
<div class="a ht" style="left:911px;width:105px;top:960px;color:#111">11:48</div>
<div class="a ht" style="left:1016px;width:60px;top:960px;color:#111">0</div>
<div class="a ht" style="left:1076px;width:60px;top:960px;color:#111">0</div>
<div class="a ht" style="left:1136px;width:60px;top:960px;color:#111">0</div>
<div class="a ht" style="left:1196px;width:60px;top:960px;color:#111">+1</div>
<div class="a ht" style="left:1256px;width:60px;top:960px;color:#111">0</div>
<div class="a ht" style="left:1316px;width:60px;top:960px;color:#111">+1</div>
<div class="a ht" style="left:1376px;width:60px;top:960px;color:#111">+6</div>
<div class="a ht" style="left:1436px;width:60px;top:960px;color:#111">+2</div>
<div class="a ht" style="left:1496px;width:60px;top:960px;color:#111">+4</div>
<div class="a ht" style="left:1556px;width:60px;top:960px;color:#111">+1</div>
<div class="a ht" style="left:1616px;width:60px;top:960px;color:#111">-1</div>
<div class="a ht" style="left:1676px;width:60px;top:960px;color:#111">+15</div>
<div class="a ht" style="left:1736px;width:60px;top:960px;color:#111">-1</div>
<div class="a ht" style="left:1796px;width:60px;top:960px;color:#111">1</div>
<div class="a ht" style="left:1856px;width:107px;top:960px;color:#111">13:15</div>
<div class="a" style="left:357px;top:984px;width:1563px;height:31px;background:#fff"></div>
<div class="a" style="left:356px;top:975px;width:1px;height:10px;background:#d6d6d6"></div>
<div class="a" style="left:357px;top:983px;width:45px;height:1px;background:#d6d6d6"></div>
<div class="a" style="left:402px;top:975px;width:1458px;height:9px;background:#2196f3"></div>
<div class="a" style="left:1860px;top:975px;width:60px;height:9px;background:#fff;border-bottom:1px solid #d6d6d6"></div>
<div class="a" style="left:349px;top:181px;width:1px;height:834px;background:#d0d0d0"></div>
<!-- ===== /Main ===== -->
<!-- ===== Left panel ===== -->
<div class="a" style="left:0;top:181px;width:349px;height:834px;background:#fff"></div>
<div class="a" style="left:0;top:181px;width:4px;height:834px;background:#fff;border-right:1px solid #d8d8d8"></div>
<div class="a" style="left:0;top:193px;width:3px;height:82px;border-top:1.5px solid #4a88d4;border-bottom:1.5px solid #4a88d4"></div>
<div class="a" style="left:0;top:217px;width:2px;height:24px;background:#23466e"></div>
<div class="a" style="left:0;top:279px;width:3px;height:52px;background:#f1f1f1"></div>
<div class="a" style="left:0;top:489px;width:3px;height:57px;background:#89aad8"></div>
<div class="a" style="left:0;top:546px;width:3px;height:57px;background:#c28ec0"></div>
<div class="a" style="left:0;top:603px;width:3px;height:171px;background:#d3d3d3"></div>
<div class="a" style="left:0;top:774px;width:3px;height:114px;background:#c28ec0"></div>
<div class="a" style="left:0;top:888px;width:3px;height:86px;background:#d3d3d3"></div>
<div class="a" style="left:0;top:395px;width:3px;height:12px;background:#333;opacity:0.6"></div>
<div class="a" style="left:340px;top:181px;width:9px;height:834px;background:#ededed;border-left:1px solid #cfcfcf;border-right:1px solid #d2d2d2"></div>
<div class="a" style="left:8px;top:184px;width:328px;height:44px;border:1px solid #dcdcdc;border-radius:7px;background:#fff"></div>
<div class="a" style="left:15px;top:194px;font-size:20.8px;color:#a0a0a0;line-height:24px">ID Vehiculo/Placa/Ruta</div>
<svg class="a" style="left:302px;top:194px" width="26" height="26" viewBox="0 0 26 26"><defs><radialGradient id="mg" cx="40%" cy="35%" r="60%"><stop offset="0" stop-color="#ffffff"/><stop offset="1" stop-color="#a9c9e6"/></radialGradient></defs><path d="M15 15L22 22" stroke="#e0a050" stroke-width="4" stroke-linecap="round"/><circle cx="10.5" cy="10.5" r="7" fill="url(#mg)" stroke="#9ab8d4" stroke-width="1.6"/></svg>
<div class="a" style="left:4px;top:231px;width:336px;height:49px;background:linear-gradient(180deg,#fdfdfd,#eeeeee);border-top:1px solid #e2e2e2;border-bottom:1px solid #d0d0d0"></div>
<div class="a" style="left:49px;top:232px;height:47px;border-left:1px dotted #c8c8c8"></div>
<div class="a" style="left:214px;top:232px;height:47px;border-left:1px dotted #c8c8c8"></div>
<div class="a lt" style="left:56px;top:243px">Placa</div>
<div class="a lt" style="left:221px;top:243px">ID Vehiculo</div>

<div class="a lnum" style="top:280px">1</div><div class="a lt" style="left:56px;top:292px">Movil 26</div><div class="a lt" style="left:221px;top:292px">26</div><div class="a lrow" style="top:327px"></div>
<div class="a lnum" style="top:328px">2</div><div class="a lt" style="left:56px;top:340px">Movil 20</div><div class="a lt" style="left:221px;top:340px">20</div><div class="a lrow" style="top:375px"></div>
<div class="a lnum" style="top:376px">3</div><div class="a lt" style="left:56px;top:388px">Movil 76</div><div class="a lt" style="left:221px;top:388px">76</div><div class="a lrow" style="top:423px"></div>
<div class="a lnum" style="top:424px">4</div><div class="a lt" style="left:56px;top:436px">Movil 88</div><div class="a lt" style="left:221px;top:436px">88</div><div class="a lrow" style="top:471px"></div>
<div class="a lnum" style="top:472px">5</div><div class="a lt" style="left:56px;top:484px">Movil 70</div><div class="a lt" style="left:221px;top:484px">70</div><div class="a lrow" style="top:519px"></div>
<div class="a lnum" style="top:520px">6</div><div class="a lt" style="left:56px;top:532px">Movil 44</div><div class="a lt" style="left:221px;top:532px">44</div><div class="a lrow" style="top:567px"></div>
<div class="a lnum" style="top:568px">7</div><div class="a lt" style="left:56px;top:580px">Movil 2</div><div class="a lt" style="left:221px;top:580px">2</div><div class="a lrow" style="top:615px"></div>
<div class="a lnum" style="top:616px">8</div><div class="a lt" style="left:56px;top:628px">Movil 34</div><div class="a lt" style="left:221px;top:628px">34</div><div class="a lrow" style="top:663px"></div>
<div class="a lnum" style="top:664px">9</div><div class="a lt" style="left:56px;top:676px">Movil 22</div><div class="a lt" style="left:221px;top:676px">22</div><div class="a lrow" style="top:711px"></div>
<div class="a lnum" style="top:712px">10</div><div class="a lt" style="left:56px;top:724px">Movil 36</div><div class="a lt" style="left:221px;top:724px">36</div><div class="a lrow" style="top:759px"></div>
<div class="a lnum" style="top:760px">11</div><div class="a lt" style="left:56px;top:772px">Movil 51</div><div class="a lt" style="left:221px;top:772px">51</div><div class="a lrow" style="top:807px"></div>
<div class="a lnum" style="top:808px">12</div><div class="a lt" style="left:56px;top:820px">Movil 49</div><div class="a lt" style="left:221px;top:820px">49</div><div class="a lrow" style="top:855px"></div>
<div class="a lnum" style="top:856px">13</div><div class="a lt" style="left:56px;top:868px">Movil 11</div><div class="a lt" style="left:221px;top:868px">11</div><div class="a lrow" style="top:903px"></div>
<div class="a lnum" style="top:904px">14</div><div class="a lt" style="left:56px;top:916px">Movil 35</div><div class="a lt" style="left:221px;top:916px">35</div><div class="a lrow" style="top:951px"></div>
<div class="a lnum" style="top:952px">15</div><div class="a lt" style="left:56px;top:964px">Movil 92</div><div class="a lt" style="left:221px;top:964px">92</div><div class="a lrow" style="top:999px"></div>

<div class="a" style="left:49px;top:280px;height:735px;border-left:1px dotted #c8c8c8"></div>
<div class="a" style="left:214px;top:280px;height:735px;border-left:1px dotted #c8c8c8"></div>
<div class="a" style="left:330px;top:280px;width:9px;height:607px;background:#2196f3"></div>
<div class="a" style="left:4px;top:1005px;width:336px;height:10px;background:#fff"></div>
<div class="a" style="left:4px;top:1005px;width:205px;height:9px;background:#2196f3"></div>

<!-- ===== Taskbar ===== -->
<div class="a" style="left:0;top:1014px;width:1920px;height:10px;background:#fff;border-top:1px solid #cfcfcf"></div>
<div class="a" style="left:0;top:1015px;width:1620px;height:9px;background:#2196f3"></div>
<div class="a" style="left:0;top:1023px;width:1920px;height:57px;background:#68cae9;border-top:1.5px solid #1f5a6e;border-bottom:1px solid #2a5c6c"></div>
<div class="a" style="left:3px;top:1024px;width:1px;height:56px;background:#2d7b96"></div>
<div class="a" style="left:74px;top:1024px;width:1px;height:56px;background:#2d7b96"></div>
<div class="a" style="left:157px;top:1024px;width:1px;height:56px;background:#2d7b96"></div>
<div class="a" style="left:246px;top:1024px;width:1px;height:56px;background:#2d7b96"></div>
<div class="a" style="left:330px;top:1024px;width:1px;height:56px;background:#2d7b96"></div>
<div class="a" style="left:415px;top:1024px;width:1px;height:56px;background:#2d7b96"></div>
<div class="a" style="left:504px;top:1024px;width:1px;height:56px;background:#2d7b96"></div>
<div class="a" style="left:587px;top:1024px;width:1px;height:56px;background:#2d7b96"></div>
<div class="a" style="left:676px;top:1024px;width:1px;height:56px;background:#2d7b96"></div>
<div class="a" style="left:759px;top:1024px;width:1px;height:56px;background:#2d7b96"></div>
<div class="a" style="left:762px;top:1024px;width:1px;height:56px;background:#2d7b96"></div>
<div class="a" style="left:845px;top:1024px;width:1px;height:56px;background:#2d7b96"></div>
<div class="a" style="left:848px;top:1024px;width:1px;height:56px;background:#2d7b96"></div>
<div class="a" style="left:931px;top:1024px;width:1px;height:56px;background:#2d7b96"></div>
<div class="a" style="left:934px;top:1024px;width:1px;height:56px;background:#2d7b96"></div>
<div class="a" style="left:1012px;top:1024px;width:1px;height:56px;background:#2d7b96"></div>
<div class="a" style="left:1015px;top:1024px;width:1px;height:56px;background:#2d7b96"></div>
<div class="a" style="left:505px;top:1025px;width:82px;height:55px;background:#8fd8f0;opacity:0.55"></div>
<div class="a" style="left:763px;top:1025px;width:82px;height:55px;background:linear-gradient(180deg,#a8e2f5,#7fd0ee 60%,#6bc3e6)"></div>
<svg class="a" style="left:16px;top:1030px" width="46" height="45" viewBox="0 0 46 45"><path d="M1 7L18 4.5V21H1Z M20 4.2L44 1V21H20Z M1 23H18V39.5L1 37Z M20 23H44V44L20 40.5Z" fill="#fff"/></svg>
<svg class="a" style="left:90px;top:1030px" width="50" height="46" viewBox="0 0 50 46"><rect x="3" y="1" width="22" height="41" fill="#2a8ed8" stroke="#fff" stroke-width="1.5"/><rect x="3" y="11" width="22" height="1.8" fill="#fff"/><rect x="21" y="21" width="22" height="8" rx="1.5" fill="none" stroke="#fff" stroke-width="1.8"/><rect x="13" y="25" width="36" height="20" rx="2" fill="#7a8c9a" stroke="#fff" stroke-width="1.5"/><path d="M16 31H46" stroke="#fff" stroke-width="1.5"/><circle cx="21" cy="31" r="2" fill="#7a8c9a" stroke="#fff"/><circle cx="41" cy="31" r="2" fill="#7a8c9a" stroke="#fff"/></svg>
<svg class="a" style="left:182px;top:1035px" width="42" height="35" viewBox="0 0 42 35"><defs><linearGradient id="psg" x1="0" y1="0" x2="0" y2="1"><stop offset="0" stop-color="#5aa8e6"/><stop offset="1" stop-color="#1f5fa8"/></linearGradient></defs><path d="M9 1H40Q42 1 41.5 3L34 32Q33.5 34 31 34H2Q0 34 0.5 32L7 3Q7.5 1 9 1Z" fill="url(#psg)"/><path d="M12 8L23 17L10 26" stroke="#fff" stroke-width="3.5" fill="none" stroke-linecap="round"/><path d="M20 27H28" stroke="#b0d0f0" stroke-width="3" stroke-linecap="round"/></svg>
<svg class="a" style="left:263px;top:1028px" width="50" height="48" viewBox="0 0 50 48"><path d="M2 8H18L21 5H46V40H2Z" fill="#e8c860"/><rect x="6" y="7" width="16" height="6" fill="#fff"/><rect x="28" y="10" width="16" height="6" fill="#fff"/><rect x="8" y="8" width="3" height="3" fill="#3aa040"/><rect x="20" y="11" width="3" height="3" fill="#d03030"/><rect x="30" y="14" width="3" height="3" fill="#3080c0"/><path d="M2 16H48V42H2Z" fill="#f5d878"/><path d="M4 30Q25 24 46 30V46H36V38H14V46H4Z" fill="#7ec4e8"/><path d="M14 38H36V46H14Z" fill="#f0e0a0"/></svg>
<svg class="a" style="left:340px;top:1024px" width="70" height="56" viewBox="0 0 70 56"><defs><radialGradient id="ieg" cx="50%" cy="55%" r="55%"><stop offset="0" stop-color="#9ef0ff"/><stop offset="0.6" stop-color="#4cc4f0"/><stop offset="1" stop-color="#1e8fd0"/></radialGradient></defs><path fill-rule="evenodd" d="M15.3 28.1A20.3 20.3 0 1 1 55.9 28.1A20.3 20.3 0 1 1 15.3 28.1ZM26.2 25.4A9 9.4 0 0 1 44.3 25.4ZM26.2 31.3H56V35.8H43Q41 40.4 35 40.4Q27 40 26.2 31.3Z" fill="url(#ieg)" stroke="#1a78b0" stroke-width="1"/><path d="M12.5 48.5Q8 42 18 28Q34 8 50 5Q58 4 56 15" stroke="#f4c21a" stroke-width="3.8" fill="none" stroke-linecap="round"/></svg>
<svg class="a" style="left:435px;top:1028px" width="50" height="50" viewBox="0 0 50 50"><path d="M4 3L38 7V33L4 30Z" fill="#2040b0" stroke="#d8dde4" stroke-width="2.5"/><path d="M8 7L30 10V20Z" fill="#4a80e8"/><path d="M18 33L24 34L26 40H12Z" fill="#c8ccd0"/><ellipse cx="20" cy="41" rx="12" ry="3" fill="#d8dce0"/><circle cx="37" cy="38" r="10" fill="#f4f4f4" stroke="#b8bcc0"/><path d="M32 40L36 36M38 40L42 36M33 36L35 38M39 36L41 38" stroke="#20a040" stroke-width="2.2"/></svg>
<svg class="a" style="left:523px;top:1029px" width="46" height="46" viewBox="-23 -23 46 46">
<path d="M0 -22A22 22 0 0 1 19.05 -11H0A11 11 0 0 0 -9.53 5.5L-19.05 -11A22 22 0 0 1 0 -22Z" fill="#db4437"/>
<path d="M19.05 -11A22 22 0 0 1 0 22L9.53 5.5A11 11 0 0 0 0 -11H19.05Z" fill="#f4c20d"/>
<path d="M0 22A22 22 0 0 1 -19.05 -11L-9.53 5.5A11 11 0 0 0 9.53 5.5Z" fill="#0f9d58"/>
<circle r="10" fill="#fff"/><circle r="8" fill="#4285f4"/></svg>
<svg class="a" style="left:607px;top:1027px" width="50" height="50" viewBox="0 0 50 50"><defs><radialGradient id="ffg" cx="60%" cy="30%" r="75%"><stop offset="0" stop-color="#ffe040"/><stop offset="0.5" stop-color="#ff8a20"/><stop offset="1" stop-color="#e8305a"/></radialGradient><radialGradient id="ffp" cx="50%" cy="50%" r="50%"><stop offset="0" stop-color="#9a40e0"/><stop offset="1" stop-color="#5a2aa8"/></radialGradient></defs><path d="M25 47A21 21 0 0 1 5 20C8 12 12 9 14 9C13 13 15 15 17 14C20 9 25 5 34 3C31 7 32 9 35 11C43 16 46 24 46 28A21 21 0 0 1 25 47Z" fill="url(#ffg)"/><circle cx="27" cy="27" r="10" fill="url(#ffp)"/><path d="M10 24C14 20 20 19 24 20C19 22 17 26 18 30C14 29 11 27 10 24Z" fill="#ffb030"/></svg>
<svg class="a" style="left:691px;top:1032px" width="52" height="46" viewBox="0 0 52 46"><rect x="3" y="1" width="46" height="32" rx="1.5" fill="#4aa0e0" stroke="#cfe6f8" stroke-width="2"/><circle cx="14" cy="13" r="7" fill="none" stroke="#fff" stroke-width="2"/><path d="M14 6A7 7 0 0 1 21 13H14Z" fill="#f0b040"/><rect x="26" y="7" width="18" height="4" rx="1" fill="#bfe0f8"/><rect x="26" y="14" width="18" height="4" rx="1" fill="#bfe0f8"/><rect x="26" y="21" width="18" height="4" rx="1" fill="#bfe0f8"/><circle cx="10" cy="25" r="1.5" fill="#f0c040"/><circle cx="15" cy="25" r="1.5" fill="#40c0f0"/><circle cx="20" cy="25" r="1.5" fill="#40c0f0"/><path d="M14 44Q14 34 24 34Q34 34 34 44Z" fill="#d0d4d8"/></svg>
<svg class="a" style="left:780px;top:1028px" width="48" height="48" viewBox="0 0 48 48"><rect x="0" y="0" width="48" height="48" rx="3" fill="#0e6fd0"/><circle cx="24" cy="24" r="19" fill="#fff"/><path d="M6 24L15 16V21H33V16L42 24L33 32V27H15V32Z" fill="#0e6fd0"/></svg>
<svg class="a" style="left:864px;top:1030px" width="52" height="48" viewBox="0 0 52 48"><path d="M3 10L12 8V36L3 34Z" fill="#b8bec4"/><rect x="12" y="2" width="38" height="32" rx="1" fill="#e8ecef" stroke="#b8c0c8"/><rect x="16" y="6" width="30" height="24" fill="#f8fbff"/><path d="M17 20H22L25 9L28 26L31 14L34 22L37 16L40 24L44 18" stroke="#4a90d8" stroke-width="1.5" fill="none"/><path d="M26 36L30 36L32 42H24Z" fill="#c8ccd0"/><ellipse cx="28" cy="43" rx="10" ry="3" fill="#d8dce0"/><rect x="4" y="14" width="4" height="3" fill="#50a050"/></svg>
<svg class="a" style="left:949px;top:1033px" width="46" height="38" viewBox="0 0 46 38"><rect x="1" y="1" width="44" height="36" fill="#000" stroke="#c8ccd0" stroke-width="2"/><rect x="2" y="2" width="42" height="3" fill="#d0d4d8"/><text x="4" y="16" font-family="Liberation Mono" font-size="9" fill="#fff">C:\_</text></svg>
<svg class="a" style="left:1611px;top:1047px" width="16" height="12" viewBox="0 0 16 12"><path d="M2 10L8 3L14 10Z" fill="#1a1a1a"/></svg>
<svg class="a" style="left:1639px;top:1038px" width="30" height="32" viewBox="0 0 30 32"><path d="M3 11H8L15 4V28L8 21H3Z" fill="#f4f4f4" stroke="#333" stroke-width="1.3"/><circle cx="21" cy="24" r="6" fill="#d82020" stroke="#fff" stroke-width="1"/><path d="M18.5 21.5L23.5 26.5M23.5 21.5L18.5 26.5" stroke="#fff" stroke-width="1.6"/></svg>
<svg class="a" style="left:1676px;top:1039px" width="28" height="28" viewBox="0 0 28 28"><rect x="2" y="2" width="6" height="20" fill="#f4f4f4" stroke="#333" stroke-width="1.2"/><rect x="10" y="6" width="16" height="12" fill="#f4f4f4" stroke="#333" stroke-width="1.2"/><path d="M18 18V24M12 24H24" stroke="#333" stroke-width="1.2"/><rect x="3.5" y="5" width="3" height="1.5" fill="#333"/></svg>
<svg class="a" style="left:1713px;top:1038px" width="28" height="30" viewBox="0 0 28 30"><path d="M4 2V28" stroke="#333" stroke-width="2"/><path d="M5 3Q10 1 14 4Q19 7 25 4V15Q19 18 14 15Q10 12 5 14Z" fill="#f4f4f4" stroke="#333" stroke-width="1.2"/></svg>
<div class="a" style="left:1755px;top:1040px;font-size:19.5px;color:#111;line-height:24px">ENG</div>
<div class="a" style="left:1833px;top:1028px;font-size:19px;color:#111;line-height:24px">16:09</div>
<div class="a" style="left:1812px;top:1053px;font-size:19px;color:#111;line-height:24px;letter-spacing:1.1px">2022/7/12</div>
<div class="a" style="left:3px;top:991px;width:168px;height:33px;background:rgba(98,190,232,0.85);border-radius:0 6px 0 0"></div>
<div class="a" style="left:10px;top:997px;font-size:19px;color:#4a6a7a;line-height:24px;white-space:nowrap">javascript:void(0);</div>
<div class="a" style="left:1405px;top:909px;font-size:31.5px;color:rgba(150,150,150,0.5);line-height:40px;white-space:nowrap">激活 Windows</div>
<div class="a" style="left:1405px;top:947px;font-size:22.5px;color:rgba(150,150,150,0.5);line-height:30px;white-space:nowrap">转到“控制面板”中的“系统”以激活 Windows。</div>
</body></html>
